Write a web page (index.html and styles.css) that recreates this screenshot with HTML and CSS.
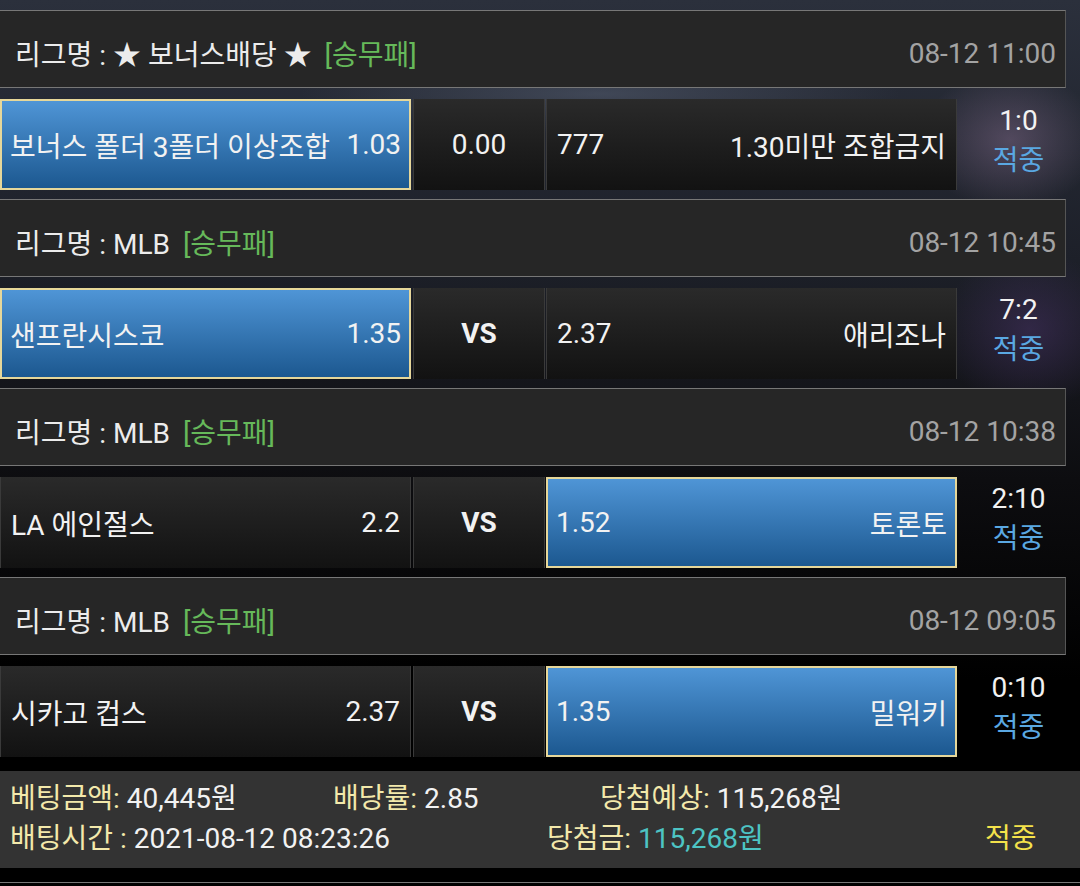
FILE: index.html
```html
<!DOCTYPE html>
<html lang="ko">
<head>
    <meta charset="UTF-8">
    <meta name="viewport" content="width=device-width, initial-scale=1.0">
    <title>배팅내역</title>
    <link rel="stylesheet" href="styles.css">
</head>
<body>
    <div class="bet-list">
        <section class="game">
            <div class="game-head">
                <span class="league">리그명 : ★ 보너스배당 ★ <em class="type">[승무패]</em></span>
                <span class="time">08-12 11:00</span>
            </div>
            <div class="game-row">
                <div class="cell side picked"><span>보너스 폴더 3폴더 이상조합</span><span>1.03</span></div>
                <div class="cell mid">0.00</div>
                <div class="cell side"><span>777</span><span>1.30미만 조합금지</span></div>
                <div class="result"><span class="score">1:0</span><span class="status">적중</span></div>
            </div>
        </section>

        <section class="game">
            <div class="game-head">
                <span class="league">리그명 : MLB <em class="type">[승무패]</em></span>
                <span class="time">08-12 10:45</span>
            </div>
            <div class="game-row">
                <div class="cell side picked"><span>샌프란시스코</span><span>1.35</span></div>
                <div class="cell mid vs">VS</div>
                <div class="cell side"><span>2.37</span><span>애리조나</span></div>
                <div class="result"><span class="score">7:2</span><span class="status">적중</span></div>
            </div>
        </section>

        <section class="game">
            <div class="game-head">
                <span class="league">리그명 : MLB <em class="type">[승무패]</em></span>
                <span class="time">08-12 10:38</span>
            </div>
            <div class="game-row">
                <div class="cell side"><span>LA 에인절스</span><span>2.2</span></div>
                <div class="cell mid vs">VS</div>
                <div class="cell side picked"><span>1.52</span><span>토론토</span></div>
                <div class="result"><span class="score">2:10</span><span class="status">적중</span></div>
            </div>
        </section>

        <section class="game">
            <div class="game-head">
                <span class="league">리그명 : MLB <em class="type">[승무패]</em></span>
                <span class="time">08-12 09:05</span>
            </div>
            <div class="game-row">
                <div class="cell side"><span>시카고 컵스</span><span>2.37</span></div>
                <div class="cell mid vs">VS</div>
                <div class="cell side picked"><span>1.35</span><span>밀워키</span></div>
                <div class="result"><span class="score">0:10</span><span class="status">적중</span></div>
            </div>
        </section>
    </div>

    <div class="summary">
        <div class="sum-line">
            <span class="col-a"><b>베팅금액:</b> 40,445원</span>
            <span class="col-b"><b>배당률:</b> 2.85</span>
            <span><b>당첨예상:</b> 115,268원</span>
        </div>
        <div class="sum-line">
            <span class="col-c"><b>배팅시간 :</b> 2021-08-12 08:23:26</span>
            <span class="col-d"><b>당첨금:</b> <i class="won">115,268원</i></span>
            <span class="hit">적중</span>
        </div>
    </div>
    <div class="bottom-line"></div>
</body>
</html>
```

FILE: styles.css
```css
body {
    margin: 0;
    width: 1080px;
    height: 886px;
    overflow: hidden;
    font-family: Roboto, "Noto Sans CJK KR", sans-serif;
    font-size: 28px;
    color: #f2f2f2;
    background-color: #000;
    background-image:
        radial-gradient(ellipse 90px 70px at 1010px 140px, rgba(120, 100, 130, 0.55), transparent),
        radial-gradient(ellipse 90px 80px at 1030px 330px, rgba(70, 50, 100, 0.55), transparent),
        radial-gradient(ellipse 300px 40px at 600px 94px, rgba(90, 100, 120, 0.5), transparent),
        linear-gradient(to bottom, #2b303c 0, #1d2029 260px, #0d0d10 480px, #000 680px);
}

.bet-list {
    padding-top: 10px;
}

.game {
    margin-bottom: 9px;
}

.game-head {
    width: 1066px;
    height: 78px;
    box-sizing: border-box;
    border-top: 1px solid #777;
    border-bottom: 1px solid #777;
    border-right: 1px solid #555;
    background-color: #262626;
    display: flex;
    justify-content: space-between;
    align-items: center;
    padding: 8px 9px 0 15px;
}

.league {
    color: #ececec;
}

.type {
    font-style: normal;
    color: #66b95a;
    margin-left: 6px;
}

.time {
    color: #a3a3a3;
}

.game-row {
    margin-top: 11px;
    height: 91px;
    display: flex;
}

.cell {
    box-sizing: border-box;
    height: 91px;
    display: flex;
    align-items: center;
    background: linear-gradient(to bottom, #2a2a2a, #121212);
    border: 1px solid #3a3a3a;
    border-top: none;
    border-bottom: none;
}

.side {
    width: 411px;
    justify-content: space-between;
    padding: 0 10px;
}

.game-row .side:first-child {
    margin-right: 2px;
}

.mid {
    width: 132px;
    justify-content: center;
    margin-right: 1px;
}

.vs {
    font-weight: 700;
}

.picked {
    background: linear-gradient(to bottom, #4f95d6, #1c5890);
    border: 2px solid #e6d79a;
    padding: 0 8px;
}

.result {
    flex: 1;
    display: flex;
    flex-direction: column;
    align-items: center;
    justify-content: center;
    line-height: 40px;
    padding-bottom: 8px;
}

.status {
    color: #5aa8e2;
}

.summary {
    margin-top: 14px;
    height: 97px;
    box-sizing: border-box;
    padding: 8px 10px;
    background-color: #333;
    line-height: 40px;
}

.sum-line {
    display: flex;
    white-space: nowrap;
}

.sum-line b {
    font-weight: 400;
    color: #f3e9ab;
}

.col-a {
    width: 323px;
}

.col-b {
    width: 267px;
}

.col-c {
    width: 537px;
}

.col-d {
    width: 438px;
}

.won {
    font-style: normal;
    color: #4dc4c4;
}

.hit {
    color: #f4e24b;
}

.bottom-line {
    margin-top: 14px;
    height: 1px;
    background-color: #777;
}
```
